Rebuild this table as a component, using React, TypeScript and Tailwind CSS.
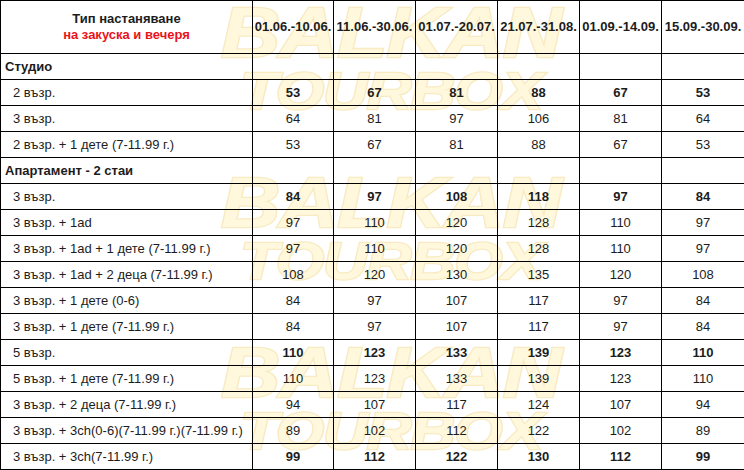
const periods = ['01.06.-10.06.', '11.06.-30.06.', '01.07.-20.07.', '21.07.-31.08.', '01.09.-14.09.', '15.09.-30.09.'];

type Row =
  | { group: string }
  | { label: string; prices: number[]; bold?: boolean };

const rows: Row[] = [
  { group: 'Студио' },
  { label: '2 възр.', prices: [53, 67, 81, 88, 67, 53], bold: true },
  { label: '3 възр.', prices: [64, 81, 97, 106, 81, 64] },
  { label: '2 възр. + 1 дете (7-11.99 г.)', prices: [53, 67, 81, 88, 67, 53] },
  { group: 'Апартамент - 2 стаи' },
  { label: '3 възр.', prices: [84, 97, 108, 118, 97, 84], bold: true },
  { label: '3 възр. + 1ad', prices: [97, 110, 120, 128, 110, 97] },
  { label: '3 възр. + 1ad + 1 дете (7-11.99 г.)', prices: [97, 110, 120, 128, 110, 97] },
  { label: '3 възр. + 1ad + 2 деца (7-11.99 г.)', prices: [108, 120, 130, 135, 120, 108] },
  { label: '3 възр. + 1 дете (0-6)', prices: [84, 97, 107, 117, 97, 84] },
  { label: '3 възр. + 1 дете (7-11.99 г.)', prices: [84, 97, 107, 117, 97, 84] },
  { label: '5 възр.', prices: [110, 123, 133, 139, 123, 110], bold: true },
  { label: '5 възр. + 1 дете (7-11.99 г.)', prices: [110, 123, 133, 139, 123, 110] },
  { label: '3 възр. + 2 деца (7-11.99 г.)', prices: [94, 107, 117, 124, 107, 94] },
  { label: '3 възр. + 3ch(0-6)(7-11.99 г.)(7-11.99 г.)', prices: [89, 102, 112, 122, 102, 89] },
  { label: '3 възр. + 3ch(7-11.99 г.)', prices: [99, 112, 122, 130, 112, 99], bold: true },
];

// faint site watermark behind the table
function Watermark({ top }: { top: string }) {
  return (
    <div
      aria-hidden="true"
      className={`absolute left-[196px] w-[390px] ${top} flex flex-col items-center italic font-bold leading-none text-[#fff8dc] [-webkit-text-stroke:3px_#f8ebc4] [paint-order:stroke_fill] select-none`}
    >
      <span className="text-[82px] tracking-[-1px] scale-y-[0.85]">BALKAN</span>
      <span className="text-[62px] -mt-[14px] tracking-[-1px] scale-y-[0.85]">TOURBOX</span>
    </div>
  );
}

export default function App() {
  return (
    <div className="relative w-[744px] h-[470px] bg-white overflow-hidden font-['Liberation_Sans',Arial,sans-serif] text-[13px] text-[#1c1c1c]">
      <div className="absolute inset-0 pointer-events-none">
        <Watermark top="top-[-8px]" />
        <Watermark top="top-[162px]" />
        <Watermark top="top-[332px]" />
      </div>
      <table className="relative table-fixed border-collapse w-[744px]">
        <colgroup>
          <col className="w-[252px]" />
          <col className="w-[81px]" />
          <col className="w-[82px]" />
          <col className="w-[82px]" />
          <col className="w-[82px]" />
          <col className="w-[82px]" />
          <col className="w-[83px]" />
        </colgroup>
        <thead>
          <tr className="h-[53px]">
            <th className="border border-black text-center font-bold leading-[16px] p-0">
              <div>Тип настаняване</div>
              <div className="text-[#e8131b]">на закуска и вечеря</div>
            </th>
            {periods.map((p) => (
              <th key={p} className="border border-black text-center font-bold p-0 whitespace-nowrap">
                {p}
              </th>
            ))}
          </tr>
        </thead>
        <tbody>
          {rows.map((r, i) =>
            'group' in r ? (
              <tr key={i} className="h-[26px]">
                <td className="border border-black font-bold pl-[4px] p-0">{r.group}</td>
                {periods.map((p) => (
                  <td key={p} className="border border-black p-0" />
                ))}
              </tr>
            ) : (
              <tr key={i} className="h-[26px]">
                <td className="border border-black pl-[12px] p-0 whitespace-nowrap">{r.label}</td>
                {r.prices.map((v, j) => (
                  <td key={j} className={`border border-black text-center p-0 ${r.bold ? 'font-bold' : ''}`}>
                    {v}
                  </td>
                ))}
              </tr>
            ),
          )}
        </tbody>
      </table>
    </div>
  );
}
